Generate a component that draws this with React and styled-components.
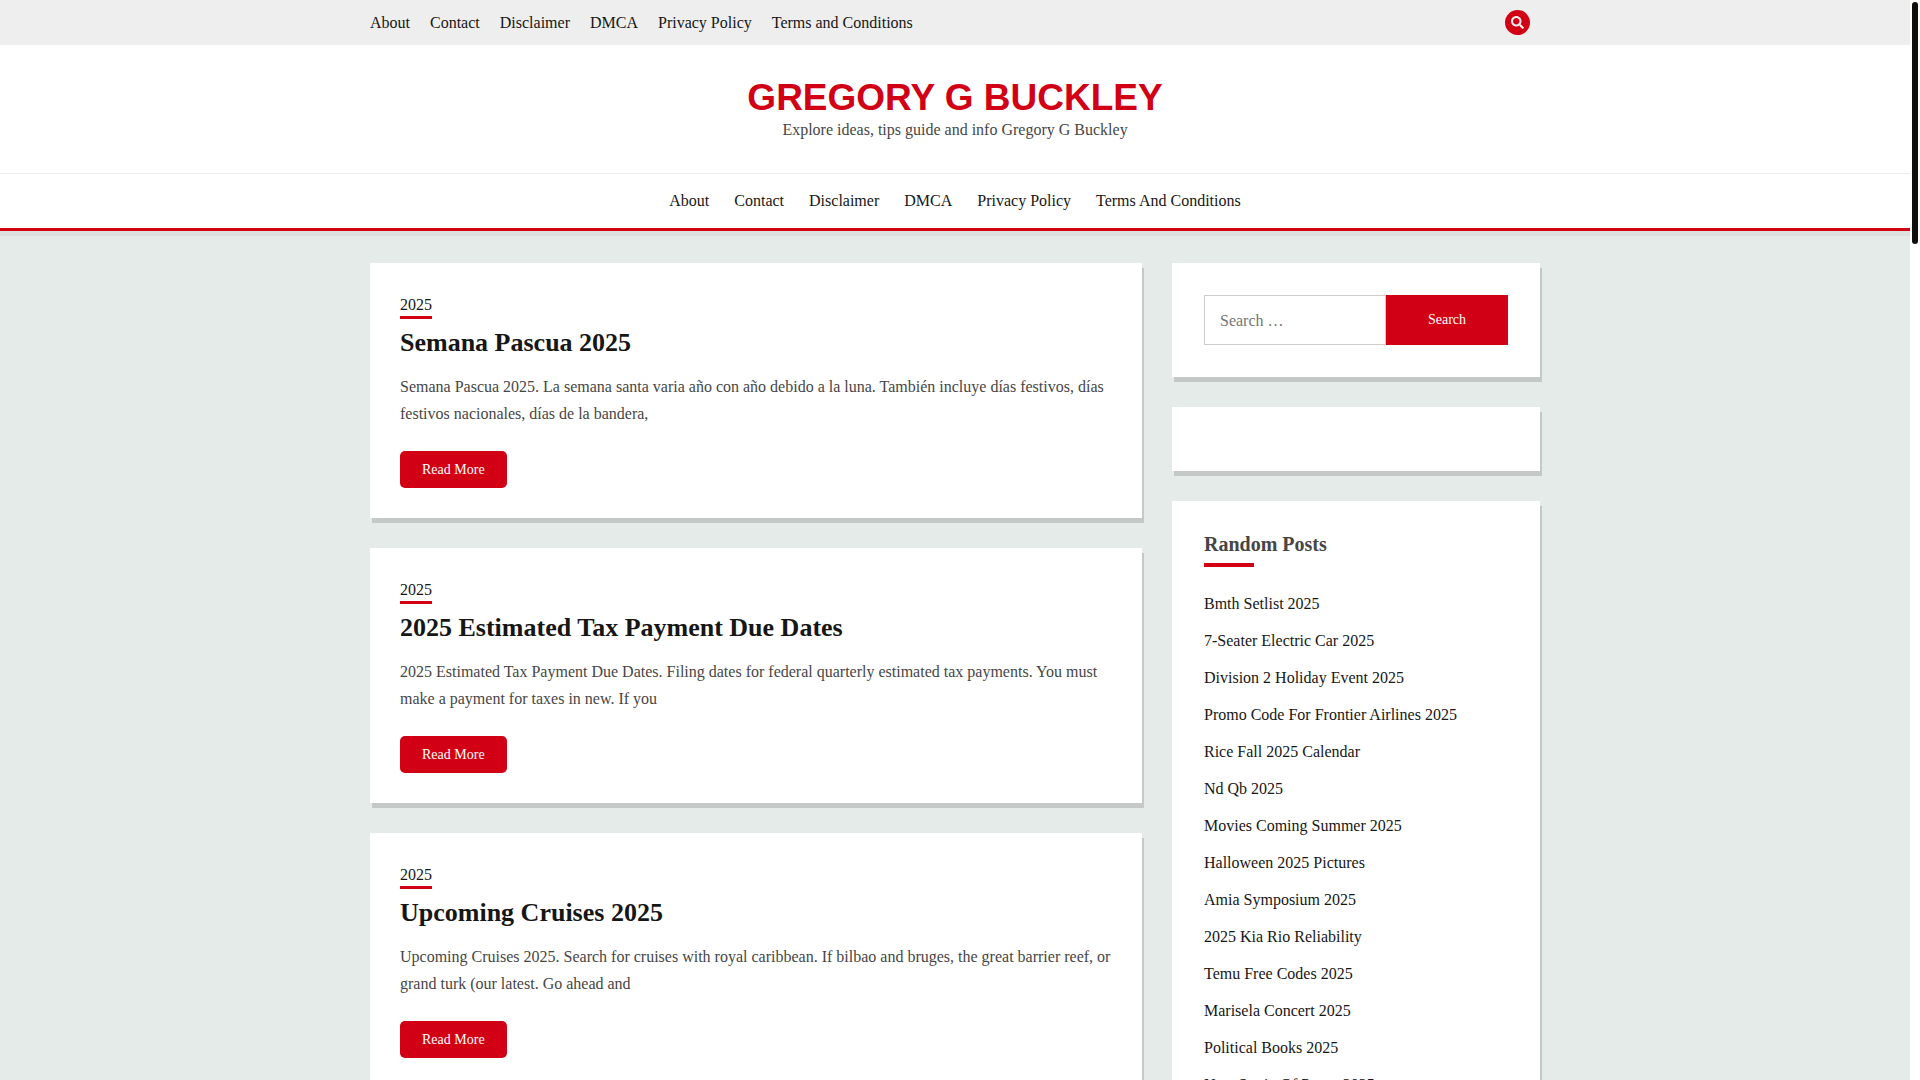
import React from "react";
import styled, { createGlobalStyle } from "styled-components";
import { FaSearch } from "react-icons/fa";

const red = "#d20014";
const ink = "#161615";
const body = "#464646";

const GlobalStyle = createGlobalStyle`
  *, *::before, *::after { box-sizing: border-box; }
  body {
    margin: 0;
    color: ${body};
    background: #fff;
    font-family: "Liberation Serif", "Times New Roman", serif;
    font-size: 16px;
    line-height: 27px;
    overflow: hidden;
  }
  h1, h2, h3, p, ul { margin: 0; padding: 0; }
  a { color: inherit; text-decoration: none; }
`;

const Window = styled.div`
  display: grid;
  grid-template-columns: minmax(0, 1fr) 10px;
  height: 100vh;
  overflow: hidden;
`;

const Page = styled.div`
  height: 100vh;
  overflow: hidden;
  background: #e5ebe9;
`;

const Rail = styled.div`
  padding: 2px;
  background: #fff;
`;

const Thumb = styled.div`
  height: 242px;
  border-radius: 3px;
  background: #0f0f0b;
`;

const Container = styled.div`
  width: 100%;
  max-width: 1170px;
  margin: 0 auto;
`;

const TopBar = styled.div`
  background: #eee;
`;

const TopInner = styled(Container)`
  display: flex;
  align-items: center;
  justify-content: space-between;
  height: 45px;
  padding-right: 10px;
`;

const Menu = styled.ul`
  display: flex;
  justify-content: center;
  gap: ${(p) => p.$gap}px;
  list-style: none;
  color: ${ink};
`;

const RoundButton = styled.button`
  display: flex;
  align-items: center;
  justify-content: center;
  width: 25px;
  height: 25px;
  padding: 0;
  border: 0;
  border-radius: 50%;
  color: #eee;
  background: ${red};
  font-size: 13px;
`;

const Branding = styled.header`
  padding: 30px 0 34px;
  text-align: center;
  background: #fff;
`;

const SiteTitle = styled.h1`
  color: ${red};
  font: bold 37px/46px "Liberation Sans", Arial, sans-serif;
  text-transform: uppercase;
`;

const Tagline = styled.p`
  line-height: 18px;
`;

const MainNav = styled.nav`
  padding: 13px 0 14px;
  border-top: 1px solid #eee;
  border-bottom: 3px solid ${red};
  background: #fff;
  box-shadow: 0 5px 0 rgba(0, 0, 0, 0.04);
`;

const Columns = styled(Container)`
  display: grid;
  grid-template-columns: minmax(0, 1fr) 368px;
  align-items: start;
  gap: 30px;
  padding-top: 32px;
`;

const Stack = styled.div`
  display: grid;
  grid-template-columns: minmax(0, 1fr);
  gap: 30px;
`;

const Card = styled.article`
  padding: 30px;
  background: #fff;
  box-shadow: 2px 5px 0 rgba(0, 0, 0, 0.14);
`;

const Category = styled.a`
  display: block;
  width: fit-content;
  border-bottom: 3px solid ${red};
  color: ${ink};
  line-height: 23px;
`;

const PostTitle = styled.h2`
  margin: 6px 0 12px;
  color: ${ink};
  font-size: 26px;
  line-height: 36px;
`;

const ReadMore = styled.a`
  display: block;
  width: fit-content;
  margin-top: 24px;
  padding: 5px 22px;
  border-radius: 5px;
  color: #fff;
  background: ${red};
  font-size: 14px;
`;

const Widget = styled.section`
  min-height: 64px;
  padding: 32px;
  background: #fff;
  box-shadow: 2px 5px 0 rgba(0, 0, 0, 0.14);
`;

const SearchForm = styled.form`
  display: flex;
  height: 50px;
`;

const SearchInput = styled.input`
  flex: 1;
  min-width: 0;
  padding: 0 15px;
  border: 1px solid #ccc;
  border-radius: 0;
  font: inherit;
  outline: 0;
  &::placeholder { color: #757575; }
`;

const SearchButton = styled.button`
  width: 122px;
  border: 0;
  color: #fff;
  background: ${red};
  font-family: inherit;
  font-size: 14px;
`;

const WidgetTitle = styled.h3`
  margin-bottom: 23px;
  font-size: 20px;
  line-height: 22px;
  &::after {
    content: "";
    display: block;
    width: 50px;
    height: 4px;
    margin-top: 8px;
    background: ${red};
  }
`;

const PostList = styled.ul`
  display: grid;
  gap: 10px;
  list-style: none;
  color: ${ink};
`;

const topLinks = ["About", "Contact", "Disclaimer", "DMCA", "Privacy Policy", "Terms and Conditions"];
const mainLinks = ["About", "Contact", "Disclaimer", "DMCA", "Privacy Policy", "Terms And Conditions"];

const posts = [
  {
    title: "Semana Pascua 2025",
    text: "Semana Pascua 2025. La semana santa varia año con año debido a la luna. También incluye días festivos, días festivos nacionales, días de la bandera,",
  },
  {
    title: "2025 Estimated Tax Payment Due Dates",
    text: "2025 Estimated Tax Payment Due Dates. Filing dates for federal quarterly estimated tax payments. You must make a payment for taxes in new. If you",
  },
  {
    title: "Upcoming Cruises 2025",
    text: "Upcoming Cruises 2025. Search for cruises with royal caribbean. If bilbao and bruges, the great barrier reef, or grand turk (our latest. Go ahead and",
  },
];

const randomPosts = [
  "Bmth Setlist 2025",
  "7-Seater Electric Car 2025",
  "Division 2 Holiday Event 2025",
  "Promo Code For Frontier Airlines 2025",
  "Rice Fall 2025 Calendar",
  "Nd Qb 2025",
  "Movies Coming Summer 2025",
  "Halloween 2025 Pictures",
  "Amia Symposium 2025",
  "2025 Kia Rio Reliability",
  "Temu Free Codes 2025",
  "Marisela Concert 2025",
  "Political Books 2025",
  "New Strain Of Parvo 2025",
];

function Links({ items, gap }) {
  return (
    <Menu $gap={gap}>
      {items.map((item) => (
        <li key={item}><a href="#">{item}</a></li>
      ))}
    </Menu>
  );
}

export default function App() {
  return (
    <>
      <GlobalStyle />
      <Window>
        <Page>
          <TopBar>
            <TopInner>
              <nav aria-label="Top"><Links items={topLinks} gap={20} /></nav>
              <RoundButton type="button" aria-label="Search"><FaSearch /></RoundButton>
            </TopInner>
          </TopBar>
          <Branding>
            <SiteTitle><a href="#">Gregory G Buckley</a></SiteTitle>
            <Tagline>Explore ideas, tips guide and info Gregory G Buckley</Tagline>
          </Branding>
          <MainNav aria-label="Main"><Links items={mainLinks} gap={25} /></MainNav>
          <Columns>
            <Stack as="main">
              {posts.map((post) => (
                <Card key={post.title}>
                  <Category href="#">2025</Category>
                  <PostTitle><a href="#">{post.title}</a></PostTitle>
                  <p>{post.text}</p>
                  <ReadMore href="#">Read More</ReadMore>
                </Card>
              ))}
            </Stack>
            <Stack as="aside">
              <Widget>
                <SearchForm role="search" onSubmit={(e) => e.preventDefault()}>
                  <SearchInput type="search" placeholder="Search …" aria-label="Search for" />
                  <SearchButton type="submit">Search</SearchButton>
                </SearchForm>
              </Widget>
              <Widget />
              <Widget>
                <WidgetTitle>Random Posts</WidgetTitle>
                <PostList>
                  {randomPosts.map((title) => (
                    <li key={title}><a href="#">{title}</a></li>
                  ))}
                </PostList>
              </Widget>
            </Stack>
          </Columns>
        </Page>
        <Rail><Thumb /></Rail>
      </Window>
    </>
  );
}
